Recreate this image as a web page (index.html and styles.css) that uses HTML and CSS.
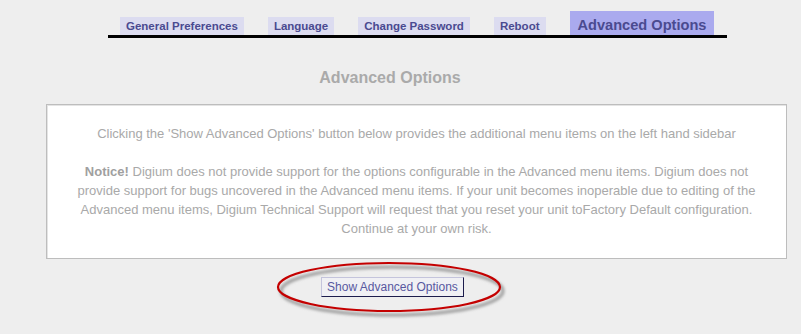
FILE: index.html
```html
<!DOCTYPE html>
<html>
	<head>
		<meta charset="UTF-8">
		<title>Advanced Options</title>
		<link rel="stylesheet" href="styles.css">
	</head>
	<body>
		<div class="tabs">
			<a class="tab" href="javascript:;">General Preferences</a>
			<a class="tab" href="javascript:;">Language</a>
			<a class="tab" href="javascript:;">Change Password</a>
			<a class="tab" href="javascript:;">Reboot</a>
			<a class="tab active" href="javascript:;">Advanced Options</a>
		</div>
		<h1 class="title">Advanced Options</h1>
		<div class="box">
			<p>Clicking the 'Show Advanced Options' button below provides the additional menu items on the left hand sidebar</p>
			<p><b>Notice!</b> Digium does not provide support for the options configurable in the Advanced menu items. Digium does not provide support for bugs uncovered in the Advanced menu items. If your unit becomes inoperable due to editing of the Advanced menu items, Digium Technical Support will request that you reset your unit toFactory Default configuration. Continue at your own risk.</p>
		</div>
		<div class="actions">
			<span class="btn-wrap">
				<button class="btn" type="button">Show Advanced Options</button>
				<!-- red circle drawn round the button -->
				<svg class="ring" width="232" height="62" viewBox="0 0 232 62">
					<defs>
						<filter id="blur" x="-10%" y="-30%" width="120%" height="160%">
							<feGaussianBlur stdDeviation="1.6"/>
						</filter>
					</defs>
					<ellipse cx="117" cy="30" rx="111" ry="24" fill="none" stroke="#9a9a9a" stroke-width="3" filter="url(#blur)"/>
					<ellipse cx="114" cy="26" rx="111" ry="24" fill="none" stroke="#c40000" stroke-width="2.2"/>
				</svg>
			</span>
		</div>
	</body>
</html>
```

FILE: styles.css
```css
*{padding: 0;margin: 0;}
body{
	background: #eeeeee;
	font-family: "Liberation Sans", Arial, sans-serif;
	width: 801px;height: 334px;
	overflow: hidden;
}
.tabs{
	display: flex;
	align-items: flex-end;
	gap: 24px;
	width: 595px;
	margin: 11px 0 0 108px;
	padding: 0 12px;
	border-bottom: 3px solid #000;
}
.tab{
	display: block;
	height: 18px;line-height: 19px;
	padding: 0 6px;
	background: #dcdcf0;
	color: #4a4a90;
	font-size: 11.5px;font-weight: bold;
	text-decoration: none;
	white-space: nowrap;
}
.tab.active{
	height: 24px;line-height: 29px;
	padding: 0 8px;
	background: #aaaaee;
	font-size: 14.6px;
	overflow: hidden;
}
.title{
	width: 780px;
	margin-top: 30px;
	text-align: center;
	font-size: 16px;line-height: 20px;
	color: #aaaaaa;
}
.box{
	width: 679px;
	margin: 16px 0 0 46px;
	padding: 19px 30px 20px;
	background: #fff;
	border: 1px solid #bdbdbd;
	box-shadow: inset 1px 1px 0 #e4e4e4;
	color: #a9a9a9;
	font-size: 13px;line-height: 19px;
	text-align: center;
}
.box p + p{margin-top: 19px;}
.box b{color: #a0a0a0;}
.actions{
	width: 785px;
	margin-top: 18px;
	text-align: center;
}
.btn-wrap{
	position: relative;
	display: inline-block;
}
.btn{
	display: block;
	height: 20px;
	padding: 0 5px;
	background: #f0f0f4;
	border: 1px solid;
	border-color: #c4c4dc #1c1c4c #1c1c4c #c4c4dc;
	color: #5858a0;
	font-family: "Liberation Sans", Arial, sans-serif;
	font-size: 12px;
}
.ring{
	position: absolute;
	left: -46px;top: -16px;
	pointer-events: none;
}
```
